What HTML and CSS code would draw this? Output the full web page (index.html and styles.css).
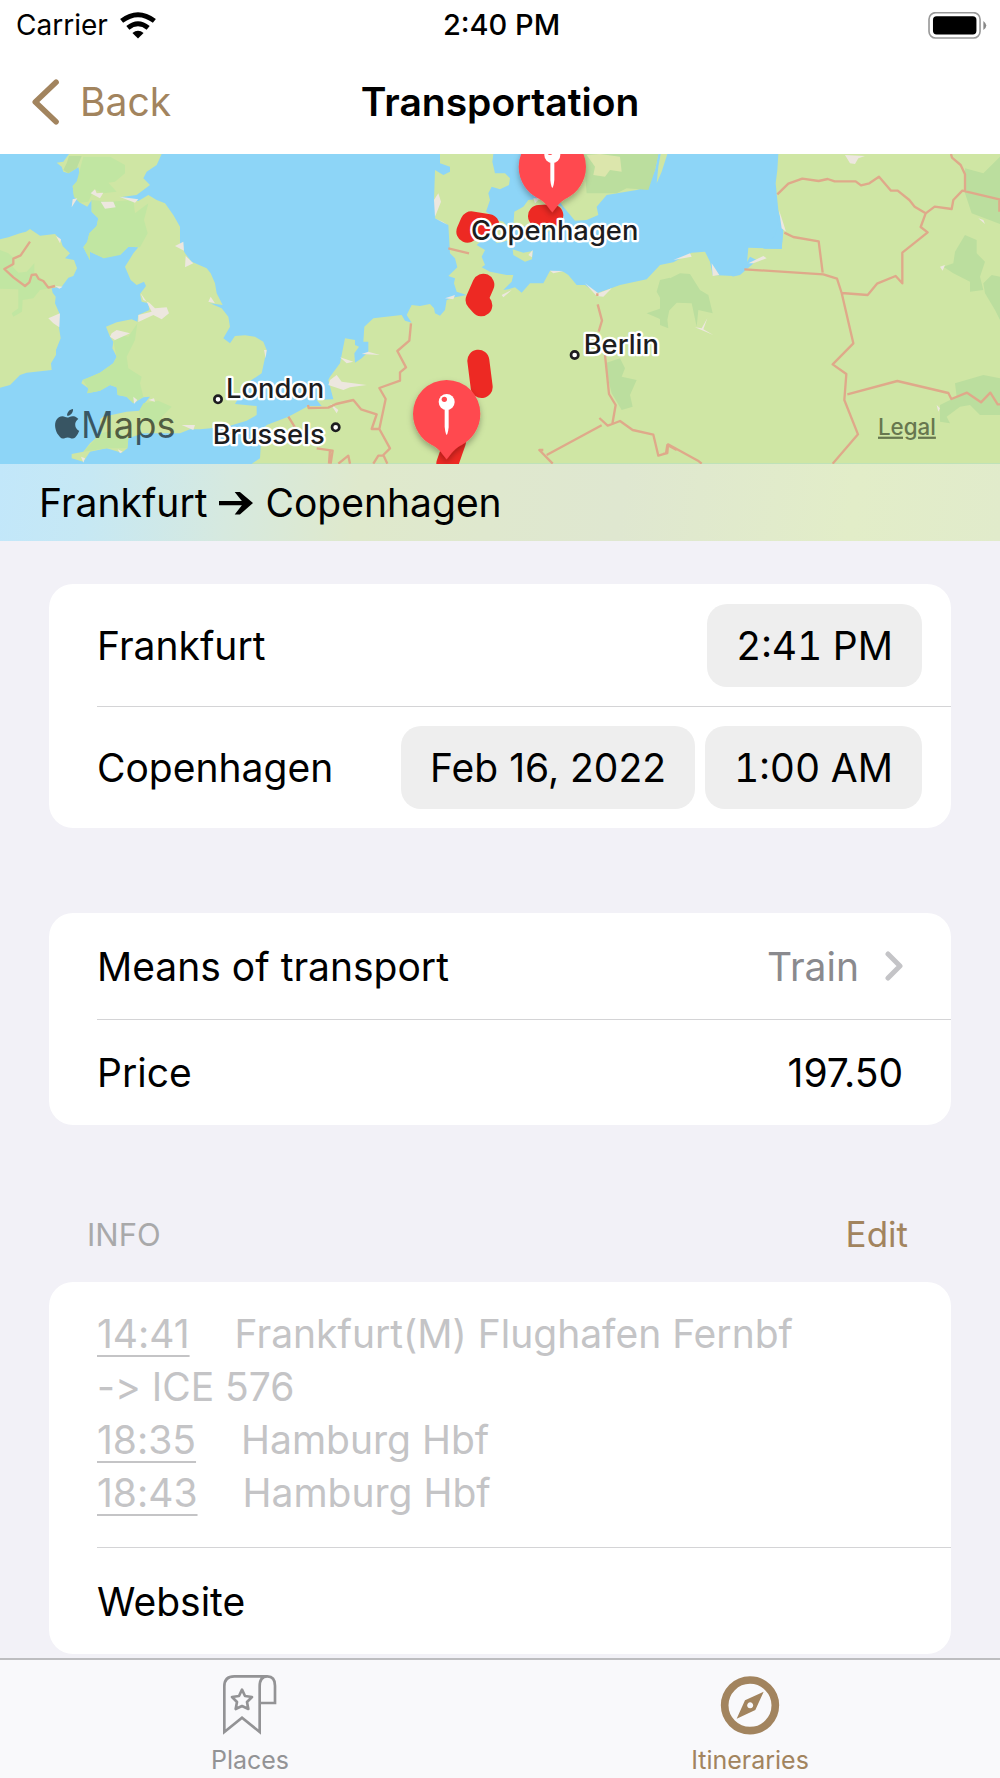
FILE: index.html
```html
<!DOCTYPE html>
<html lang="en">
<head>
<meta charset="utf-8">
<meta name="viewport" content="width=device-width, initial-scale=1">
<title>Transportation</title>
<link rel="stylesheet" href="styles.css">
</head>
<body>
<header class="top">
  <div class="status">
    <div class="carrier">Carrier
      <svg class="wifi" viewBox="0 0 110 82" aria-hidden="true"><g fill="none" stroke="#000" stroke-width="15"><path d="M5 27Q55-11 105 27"/><path d="M24 48Q55 23 86 48"/></g><path d="M38 64Q55 50 72 64L55 81z"/></svg>
    </div>
    <div class="clock">2:40 PM</div>
    <svg class="battery" viewBox="0 0 177 82" aria-hidden="true"><rect x="2" y="2" width="155" height="77" rx="20" fill="none" stroke="#999" stroke-width="5"/><rect x="14" y="13" width="132" height="55" rx="11"/><path d="M167 27q18 14 0 28z" fill="#888"/></svg>
  </div>
  <nav class="nav">
    <a class="back" href="#"><svg viewBox="0 0 82 138" aria-hidden="true"><path d="M73 9L10 69l63 60" fill="none" stroke="currentColor" stroke-width="17" stroke-linecap="round" stroke-linejoin="round"/></svg>Back</a>
    <h1>Transportation</h1>
  </nav>
</header>

<section class="hero">
  <svg class="map" viewBox="0 12 3000 930" role="img" aria-label="Route map">
    <defs>
      <filter id="shadow" x="-30%" y="-30%" width="160%" height="160%"><feDropShadow dx="0" dy="10" stdDeviation="10" flood-opacity=".3"/></filter>
      <g id="pin">
        <path d="M-101 0A101 101 0 1 1 101 0C101 45 74 78 46 93C25 103 16 116 0 137C-16 116-25 103-46 93C-74 78-101 45-101 0z" fill="#ff4a50" filter="url(#shadow)"/>
        <circle cy="-35" r="24" fill="#fff"/><circle cx="-7" cy="-43" r="8" fill="#ff4a50"/>
        <path d="M-6-14H6V40Q4 60 0 64Q-4 60-6 40z" fill="#fff"/>
      </g>
    </defs>
    <rect y="12" width="3000" height="930" fill="#8dd5f7"/>

    <!-- British Isles -->
    <path class="land" d="M0 268L25 262 60 250 78 245 90 237 120 257 165 252 182 270 188 288 210 310 195 325 222 330 231 355 220 378 205 383 185 410 155 415 158 428 167 440 165 460 178 490 172 500 182 565 168 600 168 615 153 640 155 660 80 668 60 675 30 705 0 713z"/>
    <path class="moor" d="M0 300L25 310 42 325 38 350 55 368 80 365 103 340 103 370 130 390 150 415 120 420 100 445 68 450 66 485 40 500 35 490 55 475 55 418 0 416z"/>
    <path class="land" d="M207 12L190 35 170 38 185 50 190 65 205 70 235 52 240 75 230 95 218 108 222 140 240 158 262 170 275 150 275 185 295 205 290 228 268 250 262 275 250 292 270 330 270 305 312 325 320 312 345 308 360 315 385 290 415 292 400 310 375 350 392 390 410 405 432 395 438 408 420 432 425 455 445 460 448 480 415 495 412 515 395 508 350 517 318 530 330 560 340 575 337 595 350 620 340 640 300 668 270 682 248 690 244 700 265 715 262 730 300 722 330 705 350 712 353 735 380 740 400 760 430 742 450 740 425 770 418 782 380 785 310 800 300 808 304 850 270 880 250 905 215 912 215 925 250 935 270 905 320 895 365 908 382 895 385 865 430 850 540 850 570 838 600 838 680 830 740 812 770 795 770 768 705 762 740 700 785 670 800 600 790 575 765 560 735 556 705 558 690 580 670 565 690 530 685 500 665 475 630 460 668 465 650 430 645 400 632 370 620 355 575 335 555 310 540 280 540 230 520 195 495 160 470 150 445 135 415 153 360 142 410 135 450 105 430 85 440 65 470 45 485 12z"/>
    <path class="moor" d="M250 20L330 20 375 45 375 70 345 95 325 98 350 125 310 130 282 118 265 155 240 158 222 140 218 108 230 95zM275 150L330 155 400 150 405 190 445 160 432 210 443 250 420 292 385 290 360 315 312 325 270 305 270 330 250 292 262 275 268 250 290 228 295 205 275 185zM340 575L360 555 385 560 412 520 405 570 380 620 385 655 425 680 420 700 430 740 400 760 380 740 353 735 350 712 330 705 300 722 262 730 265 715 248 690 300 668 340 640 350 620zM430 760L475 752 515 770 485 800 490 830 420 800 418 782zM304 850L340 840 385 865 382 895 320 895 250 905z"/>
    <path class="dark" d="M207 18H245L230 55 205 70 190 60 200 40z"/>
    <path class="sand" d="M218 148L232 145 215 172zM272 130L285 118 290 130 310 128 300 145zM302 155L340 155 347 172 315 176zM358 140L415 148 405 158zM525 288L550 275 552 302zM557 318L580 340 555 352zM415 495L455 485 440 455 422 430 430 450 448 458 465 475 500 472 507 490 485 508 460 495 415 516zM335 550L350 540 390 550 345 570 330 560zM145 505L180 490 178 532 160 520zM168 258L183 268 180 280zM625 455L632 440 645 460zM792 600L800 600 797 625zM545 825L585 825 580 840zM400 740L412 750 402 762zM445 750L462 745 465 755zM243 920L255 925 250 938zM353 898L368 905 360 910zM165 408L188 410 178 416z"/>
    <path class="border" d="M90 275L62 316 40 326 40 342 13 357 40 382 75 408 88 397 95 375 108 373 116 387 130 393 145 413 165 408"/>

    <g transform="translate(990 0)">
      <!-- Continental Europe and Jutland -->
      <path class="land" d="M-235 941L-210 925-205 845-190 825-125 800-65 768-25 768-40 750 10 748-5 690 0 680 30 640 45 565 75 570 75 585 87 590 73 610 75 638 95 625 115 605 115 575 100 575 103 530 130 505 215 495 225 512 245 518 230 495 245 465 270 468 300 462 312 475 315 490 330 497 345 480 350 450 375 442 410 435 380 425 372 400 375 385 355 378 382 352 375 325 360 310 355 225 315 205 320 165 312 150 315 60 340 75 360 65 360 50 330 40 330 12H490L487 35 495 70 525 70 540 85 537 105 510 118 485 110 475 130 480 150 468 185 505 210 490 240 440 285 465 300 455 320 465 345 455 352 480 365 530 375 550 375 545 395 520 420 535 418 555 412 575 428 600 400 640 400 660 362 700 365 715 375 740 405 765 405 800 430 835 418 870 405 950 388 990 345 1030 337 1085 308 1125 305 1140 335 1148 375 1210 378 1250 350 1255 293 1355 297 1358 250 1345 180 1337 100 1342 60 1345 12H2010V941z"/>
      <path class="land" d="M750 12H985L975 60 955 110 920 120 830 135 800 170 805 195 770 210 735 212 700 170 670 130zM553 185L580 170 595 150 640 145 695 170 700 200 650 250 600 230 550 225zM500 210L520 215 550 250 540 270 500 280 480 250zM548 298L580 308 608 303 606 328 585 335 550 315zM992 12H1012L995 65 980 100 985 50z"/>
      <path class="dark" d="M760 12H985L975 60 955 120 890 115 860 130 770 130z"/>
      <path d="M770 15L810 12 870 20 875 65 840 60 825 80 790 75 795 50z" fill="#dce6ac"/>
      <path class="dark" d="M990 390L1020 383 1020 470 1010 520 985 505 950 490 985 478 1005 470 980 425zM825 640L870 625 885 655 875 680 920 690 900 735 908 770 875 780 845 730 830 670zM990 400L1050 370 1080 372 1110 420 1135 435 1148 490 1105 480 1100 530 1085 460 1040 458 1010 490 1015 535 990 525zM1905 55L1960 70 2010 20V222L1925 190 1905 130zM1875 305L1905 255 1940 270 1940 310 1965 335 1950 380 1960 420 1920 425 1920 395 1870 370 1840 350 1870 340zM1960 400L1985 375 2010 380V510L1995 480 1965 430zM1875 700L1960 675 2010 685V795L1950 795 1920 765 1890 770 1850 800 1860 820 1830 815 1830 765 1880 740z"/>
      <path class="water" d="M1206 380L1240 355 1260 320 1280 330 1265 345 1230 375zM1340 175L1355 210 1360 245 1355 296H1300L1335 255 1345 225z"/>
      <path class="sand" d="M325 130L333 155 315 200 312 150zM353 225L338 215 315 205zM345 445L375 435 370 448zM0 690L20 675 35 695 110 705 60 712 40 720-5 705zM30 622L70 635 50 640zM95 612L115 605 150 615zM515 435L545 420 520 442zM660 362L700 363 670 370zM765 400L805 430 845 415 820 440 800 438zM1030 330L1080 310 1085 320zM1145 340L1168 375 1148 378zM1255 340L1300 318 1310 325 1270 340zM1347 180L1360 220 1368 245 1355 235zM1545 15L1605 18 1585 25 1575 42 1560 40zM1830 350L1845 345 1838 362zM1945 205L1960 210 1965 222zM1095 532L1115 535 1132 505 1120 538 1150 555zM1820 765L1830 775 1825 785zM0 760L25 780 20 790zM610 145L630 145 615 160zM595 315L608 300 606 322z"/>
      <g class="border">
        <path d="M243 520L238 572 202 603 228 652 210 667 210 692 148 714 167 747 148 837 180 895 160 915 172 941M148 837L125 837 140 793 93 778 70 750 18 762-5 773-64 774-66 765M-125 800L-105 832M-40 895L8 902 2 941M0 900L-3 941M25 941L55 917 60 941M130 941L145 917 160 917M355 295L417 310"/>
        <path d="M802 430V438M803 463L816 512 806 545M825 615L837 732 857 765 847 822 833 827 808 804M815 826L650 915M668 941L628 900 640 900M847 822L870 813 908 840 970 854 985 917 1008 910 1012 885 1040 900M1000 912L1012 909 1014 883 1104 932 1115 941"/>
        <path d="M1342 133L1375 101 1417 86 1466 93 1493 87 1514 94 1577 94 1593 106 1618 100 1647 80 1683 122 1703 122 1738 150 1754 170 1787 190 1772 231 1793 247 1717 308V400L1697 378 1641 401 1613 435 1535 429M1363 248L1390 261 1466 274 1478 368M1243 358L1480 373 1521 386 1535 429 1570 580 1508 643 1549 672 1543 750 1584 853 1508 941M1552 733L1702 693 1855 729 1864 747 1911 728 1953 757 1981 728 2003 763H2010M1787 190L1814 170 1865 177 1870 150 1897 122 2008 148V185M1863 12L1866 23 1892 45 1905 73V122"/>
      </g>
      <g class="route">
        <path d="M375 875L352 941M445 632L455 711M460 404L440 450 454 466M412 245L424 217 475 225M627 198L667 196"/>
      </g>
    </g>

    <g class="place">
      <circle cx="654" cy="748" r="11"/><circle cx="1007" cy="832" r="11"/><circle cx="1724" cy="615" r="11"/>
      <text x="678" y="743">London</text>
      <text x="638" y="883">Brussels</text>
      <text x="1751" y="611">Berlin</text>
    </g>
    <use href="#pin" x="1340" y="791"/>
    <use href="#pin" x="1657" y="50"/>
    <g class="place"><text x="1413" y="270">Copenhagen</text></g>
    <g class="brand">
      <path transform="translate(157 777) scale(3.7)" d="M12.152 6.896c-.948 0-2.415-1.078-3.96-1.04-2.04.027-3.91 1.183-4.961 3.014-2.117 3.675-.546 9.103 1.519 12.09 1.013 1.454 2.208 3.09 3.792 3.039 1.52-.065 2.09-.987 3.935-.987 1.831 0 2.35.987 3.96.948 1.637-.026 2.676-1.48 3.676-2.948 1.156-1.688 1.636-3.325 1.662-3.415-.039-.013-3.182-1.221-3.22-4.857-.026-3.04 2.48-4.494 2.597-4.559-1.429-2.09-3.623-2.324-4.39-2.376-2-.156-3.675 1.09-4.61 1.09zM15.53 3.83c.843-1.012 1.4-2.427 1.245-3.83-1.207.052-2.662.805-3.532 1.818-.78.896-1.454 2.338-1.273 3.714 1.338.104 2.715-.688 3.559-1.701"/>
      <text x="243" y="864">Maps</text>
    </g>
    <a href="#"><text class="legal" x="2634" y="854">Legal</text></a>
  </svg>
  <h2 class="route-title">Frankfurt
    <svg viewBox="0 0 104 72" aria-label="to"><path d="M0 30H70L48 2H64L104 36 64 71H48L70 43H0z"/></svg>
    Copenhagen</h2>
</section>

<main class="content">
  <section class="card times">
    <div class="row"><span>Frankfurt</span><div class="pills"><button class="time" type="button">2:41 PM</button></div></div>
    <div class="row"><span>Copenhagen</span><div class="pills"><button type="button">Feb 16, 2022</button><button class="time" type="button">1:00 AM</button></div></div>
  </section>

  <section class="card details">
    <a class="row" href="#"><span>Means of transport</span><span class="value">Train<svg viewBox="0 0 18 30" aria-hidden="true"><path d="M3 3l12 12L3 27" fill="none" stroke="currentColor" stroke-width="5" stroke-linecap="round" stroke-linejoin="round"/></svg></span></a>
    <div class="row"><label for="price">Price</label><input id="price" type="text" inputmode="decimal" value="197.50"></div>
  </section>

  <div class="section-head"><h3>INFO</h3><button type="button">Edit</button></div>
  <section class="card info">
    <div class="note">
      <p><a href="#">14:41</a>Frankfurt(M) Flughafen Fernbf</p>
      <p>-&gt; ICE 576</p>
      <p><a href="#">18:35</a>Hamburg Hbf</p>
      <p><a href="#">18:43</a>Hamburg Hbf</p>
    </div>
    <a class="row" href="#">Website</a>
  </section>
</main>

<nav class="tabs">
  <a href="#">
    <svg viewBox="0 0 162 180" aria-hidden="true"><g fill="none" stroke="currentColor" stroke-width="8"><path d="M132 4H34Q4 4 4 34V171L57 128 110 171V34Q110 4 133 4T156 32V84H110"/><path d="M57 44L66 63 87 66 72 81 76 102 57 93 38 102 42 81 27 66 48 63z" stroke-linejoin="round"/></g></svg>
    <span>Places</span>
  </a>
  <a class="active" href="#" aria-current="page">
    <svg viewBox="0 0 176 180" aria-hidden="true"><circle cx="88" cy="91" r="76" fill="none" stroke="currentColor" stroke-width="23"/><path fill="currentColor" fill-rule="evenodd" d="M129 50L104 105 48 131 73 76zM88 82a9 9 0 1 0 1 0z"/></svg>
    <span>Itineraries</span>
  </a>
</nav>
</body>
</html>
```
FILE: styles.css
```css
* { box-sizing: border-box; }

body {
  margin: 0;
  min-height: 100vh;
  display: flex;
  flex-direction: column;
  background: #f2f1f7;
  color: #000;
  font-family: Inter, "Liberation Sans", sans-serif;
  font-size: 39px;
  line-height: 53px;
}

h1, h2, h3, p { margin: 0; font-weight: 400; }
a { color: inherit; text-decoration: none; }
button, input { font: inherit; color: inherit; border: 0; padding: 0; margin: 0; background: none; }

.top { background: #fff; border-bottom: 1px solid #b5b9b8; }

.status {
  display: grid;
  grid-template-columns: 1fr auto 1fr;
  align-items: center;
  height: 50px;
  padding: 0 13px 0 16px;
  font-size: 28px;
  line-height: 32px;
}
.carrier { display: flex; align-items: center; gap: 12px; }
.clock { font-size: 29px; font-weight: 500; }
.wifi { width: 36px; height: 27px; }
.battery { width: 59px; height: 27px; justify-self: end; }

.nav {
  display: grid;
  grid-template-columns: 1fr auto 1fr;
  align-items: center;
  height: 104px;
  padding: 0 32px 1px;
}
.back { display: flex; align-items: center; gap: 21px; color: #a2845e; }
.back svg { width: 27px; height: 46px; }
.nav h1 { font-size: 39px; font-weight: 600; }

.hero { margin-top: -1px; }
.map { display: block; width: 100%; height: auto; }
.land { fill: #cfe6a4; }
.moor { fill: #c1e6a2; }
.dark { fill: #bbde9e; }
.water { fill: #8dd5f7; }
.sand { fill: #ede7df; }
.border { fill: none; stroke: #dfa98a; stroke-width: 7; stroke-linejoin: round; }
.route { fill: none; stroke: #ed2923; stroke-width: 66; stroke-linecap: round; stroke-linejoin: round; }
.place text {
  font-size: 82px;
  font-weight: 500;
  fill: #1d1d1f;
  stroke: #fff;
  stroke-width: 14;
  stroke-linejoin: round;
  paint-order: stroke;
}
.place circle { fill: #fff; stroke: #1d1d1f; stroke-width: 8; }
.brand { fill: #000; fill-opacity: .6; font-size: 109px; }
.legal { font-size: 67px; font-weight: 500; fill: #67774f; text-decoration: underline; }

.route-title {
  display: flex;
  align-items: center;
  gap: 12px;
  height: 77px;
  padding: 0 39px;
  font-size: 39px;
  background: linear-gradient(97deg, #c2e7fa 0%, #c6e8f4 9%, #d6e9df 23%, #dfe9cc 36%, #dfe7d0 62%, #e2edc8 85%, #e1ebcb 100%);
}
.route-title svg { width: 34px; height: 24px; }

.content { flex: 1; padding: 43px 49px 3px; }

.card { background: #fff; border-radius: 24px; padding-left: 48px; }
.row {
  display: flex;
  align-items: center;
  justify-content: space-between;
  min-height: 107px;
  padding-right: 48px;
}
.row + .row, .note + .row { border-top: 1px solid #d4d4d6; }

.times .row { min-height: 122px; padding-right: 29px; }
.pills { display: flex; gap: 10px; }
.pills button { height: 83px; padding: 0 29px; border-radius: 20px; background: #eee; }
.pills .time { font-variant-numeric: tabular-nums; }

.details { margin-top: 85px; }
.details .row { min-height: 106px; }
.value { display: flex; align-items: center; gap: 26px; color: #8a8a8e; }
.value svg { width: 18px; height: 30px; color: #c4c4c7; }
.row input { width: 240px; text-align: right; }

.section-head {
  display: flex;
  align-items: center;
  justify-content: space-between;
  margin-top: 83px;
  padding: 0 43px 0 38px;
}
.section-head h3 { font-size: 31px; color: #a9a9aa; }
.section-head button { font-size: 35px; color: #a2845e; }

.info { margin-top: 21px; }
.note { padding: 25px 48px 28px 0; color: #c4c4c6; font-variant-ligatures: none; font-feature-settings: "calt" 0; }
.note a { margin-right: 45px; text-decoration: underline; text-decoration-thickness: 2px; text-underline-offset: 7px; }

.tabs {
  display: grid;
  grid-template-columns: 1fr 1fr;
  height: 120px;
  padding-top: 15px;
  border-top: 2px solid #bdbdc0;
  background: #f9f9fb;
  color: #939395;
  font-size: 25px;
  line-height: 32px;
}
.tabs a { display: flex; flex-direction: column; align-items: center; gap: 9px; }
.tabs svg { height: 60px; width: 60px; }
.tabs .active { color: #a2845e; }
```
